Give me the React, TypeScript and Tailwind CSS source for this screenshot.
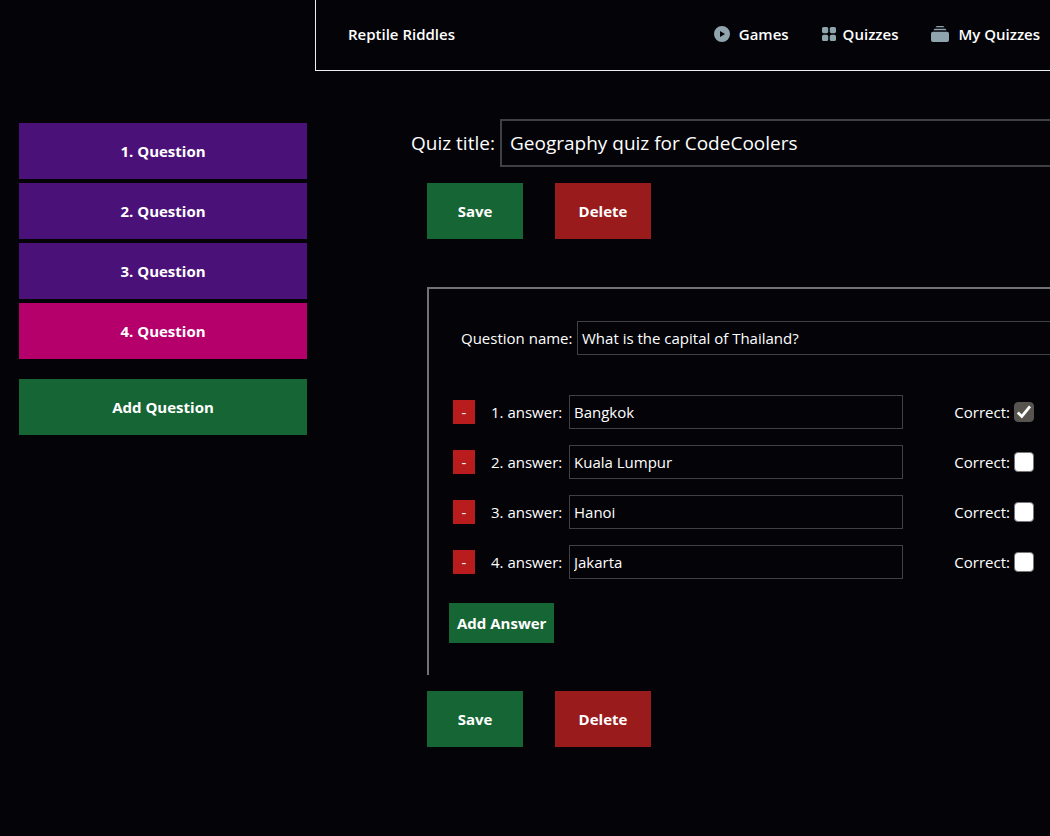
import { useState } from "react";

function GamesIcon() {
  return (
    <svg viewBox="0 0 16 16" className="size-4 shrink-0" fill="#90a4ae" aria-hidden="true">
      <path fillRule="evenodd" d="M8 0a8 8 0 1 0 0 16A8 8 0 0 0 8 0ZM6 4.9v6.2L11 8Z" />
    </svg>
  );
}

function QuizzesIcon() {
  return (
    <svg viewBox="0 0 14 14" className="size-3.5 shrink-0" fill="#90a4ae" aria-hidden="true">
      <rect width="6.2" height="6.2" rx="1.6" />
      <rect x="7.8" width="6.2" height="6.2" rx="1.6" />
      <rect y="7.8" width="6.2" height="6.2" rx="1.6" />
      <rect x="7.8" y="7.8" width="6.2" height="6.2" rx="1.6" />
    </svg>
  );
}

function StackIcon() {
  return (
    <svg viewBox="0 0 18 16" className="h-4 w-[18px] shrink-0" fill="#90a4ae" aria-hidden="true">
      <path d="M6 0h6a1.6 1.6 0 0 1 1.4 1.3H4.6A1.6 1.6 0 0 1 6 0Z" />
      <path d="M4.4 2.8h9.2a2 2 0 0 1 1.9 1.4h-13a2 2 0 0 1 1.9-1.4Z" />
      <rect y="5.7" width="18" height="10.3" rx="2" />
    </svg>
  );
}

const links = [
  { label: "Games", icon: <GamesIcon />, gap: "gap-[9px]" },
  { label: "Quizzes", icon: <QuizzesIcon />, gap: "gap-[7px]" },
  { label: "My Quizzes", icon: <StackIcon />, gap: "gap-[9px]" },
];

const initialAnswers = [
  { text: "Bangkok", correct: true },
  { text: "Kuala Lumpur", correct: false },
  { text: "Hanoi", correct: false },
  { text: "Jakarta", correct: false },
];

function FormActions() {
  return (
    <div className="flex gap-8 pl-4 font-bold">
      <button type="button" className="h-14 w-24 bg-[#166534]">Save</button>
      <button type="button" className="h-14 w-24 bg-[#991b1b]">Delete</button>
    </div>
  );
}

export default function App() {
  const [title, setTitle] = useState("Geography quiz for CodeCoolers");
  const [question, setQuestion] = useState("What is the capital of Thailand?");
  const [answers, setAnswers] = useState(initialAnswers);
  const [selected, setSelected] = useState(4);

  const update = (index: number, change: Partial<(typeof initialAnswers)[number]>) =>
    setAnswers(answers.map((a, i) => (i === index ? { ...a, ...change } : a)));

  return (
    <div className="flex min-h-screen bg-[#030308] font-['Open_Sans','Noto_Sans',sans-serif] text-[15px] text-white">
      <aside className="w-[315px] shrink-0 pt-[123px] pr-2 pl-[19px] font-bold">
        <div className="flex flex-col gap-1">
          {[1, 2, 3, 4].map((n) => (
            <button
              key={n}
              type="button"
              onClick={() => setSelected(n)}
              className={`h-14 w-full ${n === selected ? "bg-[#b5006c]" : "bg-[#4a1279]"}`}
            >
              {n}. Question
            </button>
          ))}
        </div>
        <button type="button" className="mt-5 h-14 w-full bg-[#166534]">Add Question</button>
      </aside>

      <div className="min-w-0 flex-1">
        <header className="flex h-[71px] items-center justify-between border-b border-l border-[#eceff1] pr-2.5 pb-0.5 pl-8 font-semibold">
          <a href="#home">Reptile Riddles</a>
          <nav className="flex gap-[33px]">
            {links.map((link) => (
              <a key={link.label} href="#nav" className={`flex items-center ${link.gap}`}>
                {link.icon}
                {link.label}
              </a>
            ))}
          </nav>
        </header>

        <main className="pt-12 pl-24">
          <div className="mb-4 flex items-center gap-1 text-[19px]">
            <label htmlFor="title" className="w-[85px] shrink-0 whitespace-nowrap">Quiz title:</label>
            <input
              id="title"
              value={title}
              onChange={(e) => setTitle(e.target.value)}
              className="h-12 min-w-0 flex-1 border-2 border-r-0 border-[#3f3f46] bg-transparent px-2 outline-none"
            />
          </div>
          <FormActions />

          <section className="mt-12 mb-4 ml-4 border-t-2 border-l-2 border-[#71717a] pt-8 pb-8 pl-5">
            <div className="mb-10 flex items-center gap-1 pl-3">
              <label htmlFor="question" className="w-28 shrink-0 whitespace-nowrap">Question name:</label>
              <input
                id="question"
                value={question}
                onChange={(e) => setQuestion(e.target.value)}
                className="h-[34px] min-w-0 flex-1 border border-r-0 border-[#3f3f46] bg-transparent px-1 outline-none"
              />
            </div>
            <div className="flex flex-col gap-4 pr-4 pl-1">
              {answers.map((answer, i) => (
                <div key={i} className="flex items-center">
                  <button
                    type="button"
                    aria-label={`Remove answer ${i + 1}`}
                    onClick={() => setAnswers(answers.filter((_, j) => j !== i))}
                    className="h-6 w-[22px] shrink-0 bg-[#b91c1c]"
                  >
                    -
                  </button>
                  <label htmlFor={`answer-${i}`} className="ml-4 w-[78px] shrink-0 whitespace-nowrap">
                    {i + 1}. answer:
                  </label>
                  <input
                    id={`answer-${i}`}
                    value={answer.text}
                    onChange={(e) => update(i, { text: e.target.value })}
                    className="h-[34px] w-[334px] min-w-0 border border-[#3f3f46] bg-transparent px-1 outline-none"
                  />
                  <label className="ml-auto flex items-center gap-1 whitespace-nowrap">
                    Correct:
                    <span className="relative block size-5">
                      <input
                        type="checkbox"
                        checked={answer.correct}
                        onChange={(e) => update(i, { correct: e.target.checked })}
                        className="block size-5 appearance-none rounded-[4px] border border-[#767676] bg-white checked:border-[#57534e] checked:bg-[#57534e]"
                      />
                      {answer.correct && (
                        <svg
                          viewBox="0 0 20 20"
                          className="pointer-events-none absolute inset-0 size-5"
                          fill="none"
                          stroke="#fff"
                          strokeWidth="2.8"
                          aria-hidden="true"
                        >
                          <path d="M3.8 10.6 7.8 14.4 16 4.4" />
                        </svg>
                      )}
                    </span>
                  </label>
                </div>
              ))}
            </div>
            <button
              type="button"
              onClick={() => setAnswers([...answers, { text: "", correct: false }])}
              className="mt-6 h-10 bg-[#166534] px-2 font-bold"
            >
              Add Answer
            </button>
          </section>
          <FormActions />
        </main>
      </div>
    </div>
  );
}
